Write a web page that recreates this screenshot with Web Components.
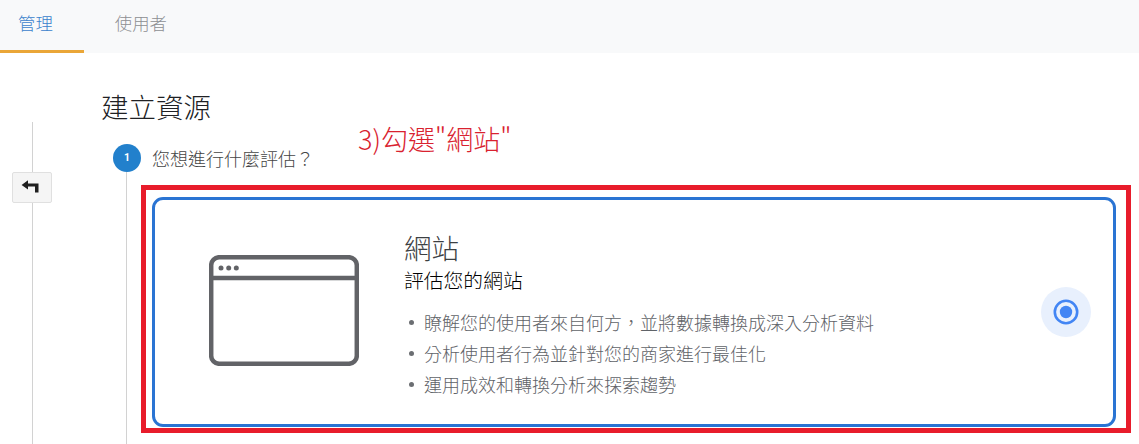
<!DOCTYPE html>
<html lang="zh-Hant"><head><meta charset="utf-8"><title>建立資源</title>
<style>
html,body{margin:0;padding:0;background:#fff;height:444px;overflow:hidden;font-family:"Noto Sans CJK TC","Liberation Sans",sans-serif}
</style></head><body>
<admin-page></admin-page>
<script>
const def=(name,html)=>customElements.define(name,class extends HTMLElement{
  constructor(){super();this.attachShadow({mode:'open'}).innerHTML=html;}
});
def('tab-bar',`<style>
:host{display:flex;height:53px;background:#f8f9fa;font:300 17.4px/1 "Noto Sans CJK TC",sans-serif}
</style><slot></slot>`);
def('tab-item',`<style>
:host{display:flex;align-items:center;box-sizing:border-box;height:53px;padding:0 31px 5px;color:#8d8f92;border-bottom:3px solid transparent}
:host([active]){color:#3b82cc;border-bottom-color:#eaa638;padding-left:18px}
</style><slot></slot>`);
def('back-rail',`<style>
:host{display:block;position:relative;width:65px;flex:none;box-sizing:border-box}
.line{position:absolute;left:32px;top:69px;bottom:0;width:1px;background:#d2d2d2}
button{position:absolute;left:12px;top:119px;width:40px;height:31px;padding:0 5px 3px 0;box-sizing:border-box;border:1px solid #e0e0e0;border-radius:2px;background:#f5f5f5;display:flex;align-items:center;justify-content:center}
</style><div class="line"></div><button aria-label="返回"><svg width="18" height="13" viewBox="0 0 18 13"><path d="M7 0.3 L0.6 4.9 L7 9.5 V6.6 H14 V12.6 H17.5 V3.4 H7Z" fill="#1f1f1f"/></svg></button>`);
def('step-badge',`<style>
:host{display:flex;align-items:center;justify-content:center;width:28px;height:28px;border-radius:50%;background:#2280cc;color:#fff;font:700 10.5px/1 Roboto,sans-serif;flex:none}
</style><slot></slot>`);
def('option-card',`<style>
:host{display:flex;box-sizing:border-box;width:964px;height:230px;border:3px solid #2a74d3;border-radius:11px;background:#fff;align-items:center}
.art{flex:none;width:204px;display:flex;justify-content:flex-end;padding-bottom:3px;box-sizing:border-box}
.body{flex:1;margin-left:45px;align-self:flex-start;padding-top:29px}
.radio{flex:none;width:50px;height:50px;margin-right:22px}
h3{margin:0 0 1px;font:300 27.5px/36px "Noto Sans CJK TC",sans-serif;color:#3c4043}
h4{margin:0 0 13px;font:300 19.8px/28px "Noto Sans CJK TC",sans-serif;color:#000}
ul{margin:0;padding:0 0 0 20px;list-style:none}
li{font:300 18px/31px "Noto Sans CJK TC",sans-serif;color:#5f6368;position:relative}
li::before{content:"";position:absolute;left:-15px;top:13px;width:5px;height:5px;border-radius:50%;background:#6b6e72}
</style>
<div class="art"><svg width="150" height="111" viewBox="0 0 150 111" fill="none"><rect x="2.2" y="2.2" width="145.6" height="106.6" rx="8" stroke="#626367" stroke-width="4.5"/><path d="M2 23H148" stroke="#626367" stroke-width="4.5"/><g fill="#626367"><circle cx="12" cy="13" r="2.5"/><circle cx="19.7" cy="13" r="2.5"/><circle cx="27.3" cy="13" r="2.5"/></g></svg></div>
<div class="body"><h3>網站</h3><h4>評估您的網站</h4><ul><li>瞭解您的使用者來自何方，並將數據轉換成深入分析資料</li><li>分析使用者行為並針對您的商家進行最佳化</li><li>運用成效和轉換分析來探索趨勢</li></ul></div>
<svg class="radio" viewBox="0 0 50 50"><circle cx="25" cy="25" r="25" fill="#e8f0fd"/><circle cx="25" cy="25" r="11.2" fill="none" stroke="#4285f4" stroke-width="2.6"/><circle cx="25" cy="25" r="6.2" fill="#4285f4"/></svg>`);
def('admin-page',`<style>
:host{display:block;width:1139px;height:444px;position:relative;overflow:hidden;background:#fff}
.wrap{display:flex;height:391px}
main{flex:1;padding-left:37px;position:relative}
h1{margin:0 0 0 -1px;padding-top:35px;font:300 27.5px/36px "Noto Sans CJK TC",sans-serif;color:#202124}
.step{display:flex;align-items:center;gap:11px;margin:20px 0 0 11px;font:300 18px/28px "Noto Sans CJK TC",sans-serif;color:#444}
.content{margin:25px 0 0 24px;position:relative;padding-left:26px}
.content::before{content:"";position:absolute;left:0;top:-25px;height:300px;width:1px;background:#d2d2d2}
.note{position:absolute;left:358px;top:121px;font:300 27px/36px "Noto Sans CJK TC",sans-serif;color:#d9222f;white-space:nowrap}
.frame{position:absolute;left:141px;top:185px;width:990px;height:248px;box-sizing:border-box;border:5px solid #e81c2b;pointer-events:none}
</style>
<tab-bar><tab-item active>管理</tab-item><tab-item>使用者</tab-item></tab-bar>
<div class="wrap"><back-rail></back-rail><main>
<h1>建立資源</h1>
<div class="step"><step-badge>1</step-badge><span>您想進行什麼評估？</span></div>
<div class="content"><option-card></option-card></div>
</main></div>
<div class="note">3)勾選"網站"</div><div class="frame"></div>`);
</script></body></html>
